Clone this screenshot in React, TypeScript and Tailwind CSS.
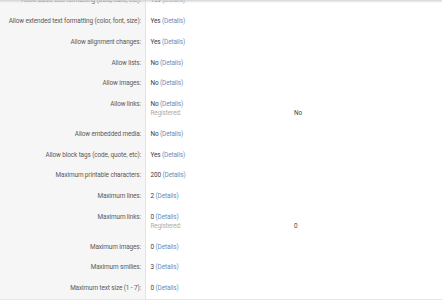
import React from "react";

type Row = { label: string; value: string; sub?: string };

const rows: Row[] = [
  { label: "Allow basic text formatting (bold, italic, etc):", value: "Yes" },
  { label: "Allow extended text formatting (color, font, size):", value: "Yes" },
  { label: "Allow alignment changes:", value: "Yes" },
  { label: "Allow lists:", value: "No" },
  { label: "Allow images:", value: "No" },
  { label: "Allow links:", value: "No", sub: "No" },
  { label: "Allow embedded media:", value: "No" },
  { label: "Allow block tags (code, quote, etc):", value: "Yes" },
  { label: "Maximum printable characters:", value: "200" },
  { label: "Maximum lines:", value: "2" },
  { label: "Maximum links:", value: "0", sub: "0" },
  { label: "Maximum images:", value: "0" },
  { label: "Maximum smilies:", value: "3" },
  { label: "Maximum text size (1 - 7):", value: "0" },
];

export default function App() {
  return (
    <div
      className="relative w-[442px] h-[300px] overflow-hidden bg-white"
      style={{ fontFamily: 'Roboto, "Noto Sans", sans-serif' }}
    >
      <div className="absolute top-0 left-0 right-0 h-[3px] bg-gradient-to-b from-[#d4d4d4] to-[#f5f5f5]/0 z-10" />
      <div className="mt-[-9.5px] flex flex-col text-[6.4px] leading-[9px] tracking-[-0.1px] whitespace-nowrap">
        {rows.map((r, i) => (
          <div
            key={i}
            className={`flex ${i === rows.length - 1 ? "border-b border-[#e6e6e6]" : ""}`}
          >
            <div className="w-[146px] shrink-0 bg-[#f6f6f6] border-r border-[#e3e3e3] pr-[4px] py-[5.875px] text-right text-[#5a5a5a]">
              {r.label}
            </div>
            <div className="pl-[4.5px] py-[5.875px] text-[#3c3c3c]">
              <div>
                {r.value} <span className="text-[#5f8fbc]">(Details)</span>
              </div>
              {r.sub !== undefined && (
                <div className="flex">
                  <span className="w-[143.5px] text-[#acacac]">Registered:</span>
                  <span className="text-[#444444]">{r.sub}</span>
                </div>
              )}
            </div>
          </div>
        ))}
      </div>
    </div>
  );
}
